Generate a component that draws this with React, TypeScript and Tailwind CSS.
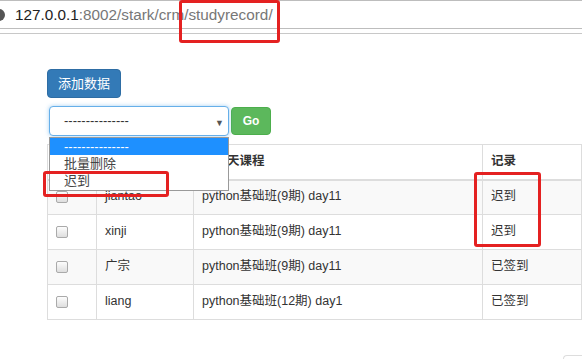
const rows = [
  { name: "jiantao", course: "python基础班(9期) day11", record: "迟到" },
  { name: "xinji", course: "python基础班(9期) day11", record: "迟到" },
  { name: "广宗", course: "python基础班(9期) day11", record: "已签到" },
  { name: "liang", course: "python基础班(12期) day1", record: "已签到" },
];

function Checkbox() {
  return (
    <span className="block w-[12px] h-[12px] rounded-[2px] border border-[#aaa] bg-gradient-to-b from-[#fdfdfd] to-[#dedede]" />
  );
}

export default function App() {
  return (
    <div
      className="relative w-[582px] h-[359px] overflow-hidden bg-white text-[#333]"
      style={{ fontFamily: '"Liberation Sans", "Noto Sans CJK SC", sans-serif' }}
    >
      {/* address bar */}
      <div className="h-[29px] border-t border-b border-[#bdbdbd] flex items-center">
        <svg width="12" height="12" viewBox="0 0 12 12" className="-ml-[7px] mr-[10px]">
          <circle cx="6" cy="6" r="6" fill="#555" />
          <rect x="5.2" y="5" width="1.6" height="4.5" fill="#fff" />
          <rect x="5.2" y="2.5" width="1.6" height="1.6" fill="#fff" />
        </svg>
        <span className="text-[15.3px] leading-[20px]">
          <span className="text-[#222]">127.0.0.1</span>
          <span className="text-[#777]">:8002/stark/crm/studyrecord/</span>
        </span>
      </div>
      <div className="h-[5px] border-b border-[#c8c8c8]" />

      {/* page */}
      <div className="pl-[47px] pt-[35px]">
        <button className="w-[74px] h-[29px] rounded-[4px] bg-[#337ab7] border border-[#2e6da4] text-white text-[13px] leading-[27px]">
          添加数据
        </button>

        <div className="mt-[8px] flex items-center gap-[2px] pl-[2px]">
          <div className="relative w-[180px] h-[30px] rounded-[4px] border border-[#66afe9] shadow-[0_0_4px_rgba(102,175,233,0.6)] bg-white flex items-center pl-[14px] text-[13px]">
            ---------------
            <span className="absolute right-[4px] top-[10px] text-[9px] text-[#555]">▼</span>
          </div>
          <button className="w-[40px] h-[28px] rounded-[4px] bg-[#5cb85c] border border-[#4cae4c] text-white text-[12px] font-bold">
            Go
          </button>
        </div>

        <table className="mt-[8px] w-[535px] border-collapse text-[12.5px] table-fixed">
          <thead>
            <tr className="h-[35px]">
              <th className="w-[49px] border border-[#ddd] border-b-2" />
              <th className="w-[97px] border border-[#ddd] border-b-2" />
              <th className="w-[289px] border border-[#ddd] border-b-2 text-left px-[8px]">第几天课程</th>
              <th className="border border-[#ddd] border-b-2 text-left px-[8px]">记录</th>
            </tr>
          </thead>
          <tbody>
            {rows.map((r, i) => (
              <tr key={i} className={i % 2 === 0 ? "h-[35px] bg-[#f9f9f9]" : "h-[35px] bg-white"}>
                <td className="border border-[#ddd] pl-[8px]">
                  <Checkbox />
                </td>
                <td className="border border-[#ddd] px-[8px] pb-[2px]">{r.name}</td>
                <td className="border border-[#ddd] px-[8px] pb-[2px]">{r.course}</td>
                <td className="border border-[#ddd] px-[8px] pb-[2px]">{r.record}</td>
              </tr>
            ))}
          </tbody>
        </table>

        <div className="mt-[35px] ml-[516px] w-[30px] h-[12px] rounded-tl-[4px] border-t border-l border-[#ddd]" />
      </div>

      {/* open select list */}
      <div className="absolute left-[49px] top-[137px] w-[180px] h-[54px] border border-[#9a9a9a] bg-white text-[13px] leading-[17px]">
        <div className="h-[17px] bg-[#1e90ff] text-white pl-[14px]">---------------</div>
        <div className="h-[17px] pl-[14px] text-[#444]">批量删除</div>
        <div className="h-[17px] pl-[14px] text-[#444]">迟到</div>
      </div>

      {/* red annotation boxes */}
      <div className="absolute left-[179px] top-[0px] w-[101px] h-[43px] border-[3px] border-[#e42121] rounded-[3px]" />
      <div className="absolute left-[43px] top-[171px] w-[126px] h-[26px] border-[3px] border-[#e42121] rounded-[3px]" />
      <div className="absolute left-[474px] top-[172px] w-[67px] h-[75px] border-[3px] border-[#e42121] rounded-[3px]" />
    </div>
  );
}
